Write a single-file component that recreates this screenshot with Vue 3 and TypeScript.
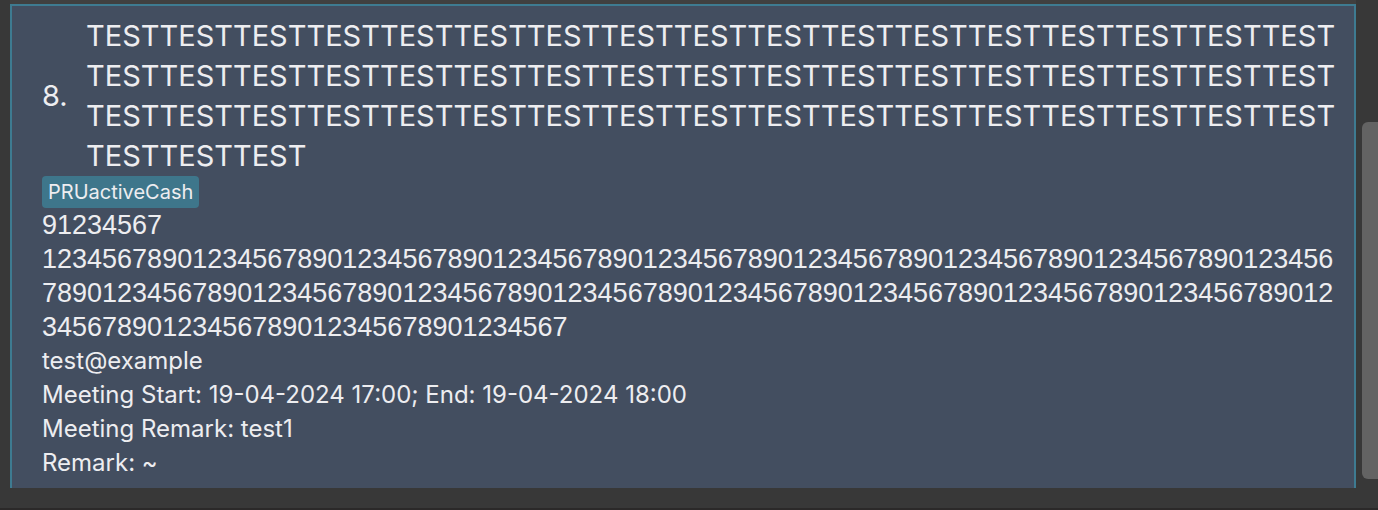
<script setup lang="ts">
interface Client {
  index: number
  name: string
  tags: string[]
  details: string[]
}

const client: Client = {
  index: 8,
  name: 'TEST'.repeat(54),
  tags: ['PRUactiveCash'],
  details: [
    '91234567',
    '1234567890'.repeat(20) + '1234567',
    'test@example',
    'Meeting Start: 19-04-2024 17:00; End: 19-04-2024 18:00',
    'Meeting Remark: test1',
    'Remark: ~',
  ],
}

const isNumeric = (text: string): boolean => /^\d+$/.test(text)
</script>

<template>
  <main class="panel">
    <div class="list">
      <article class="card">
        <header class="heading">
          <span class="index">{{ client.index }}.</span>
          <h2 class="name">{{ client.name }}</h2>
        </header>
        <div class="tags">
          <span v-for="tag in client.tags" :key="tag" class="tag">{{ tag }}</span>
        </div>
        <p
          v-for="line in client.details"
          :key="line"
          class="detail"
          :class="{ numeric: isNumeric(line) }"
        >{{ line }}</p>
      </article>
    </div>
    <div class="track"><div class="thumb"></div></div>
  </main>
</template>

<style>
body {
  background: #383838;
}
</style>

<style scoped>
.panel {
  display: flex;
  height: 100vh;
  box-sizing: border-box;
  padding-bottom: 20px;
  border-bottom: 2px solid #2b2929;
  background: #383838;
  color: #ededf0;
  font-family: Inter, "Liberation Sans", sans-serif;
}

.list {
  flex: 1;
  min-width: 0;
  margin-left: 10px;
  padding-top: 4px;
  background: #404040;
  display: flex;
}

.card {
  flex: 1;
  min-width: 0;
  box-sizing: border-box;
  padding: 10px 12px 8px 30px;
  border: 2px solid #3e7b91;
  border-bottom: 0;
  background: #434e60;
}

.heading {
  display: flex;
  align-items: center;
  gap: 16px;
  font-size: 29px;
  line-height: 40px;
}

.index {
  min-width: 28px;
}

.name {
  flex: 1;
  min-width: 0;
  margin: 0;
  font: inherit;
  overflow-wrap: anywhere;
}

.tags {
  display: flex;
  gap: 6px;
}

.tag {
  padding: 0 6px;
  border-radius: 4px;
  background: #3e768b;
  font-size: 20px;
  line-height: 32px;
}

.detail {
  margin: 0;
  font-size: 24px;
  line-height: 34px;
  overflow-wrap: anywhere;
}

.numeric {
  font-family: "Liberation Sans", Arial, sans-serif;
  font-size: 27px;
}

.track {
  display: flex;
  flex-direction: column;
  width: 22px;
  box-sizing: border-box;
  padding: 122px 0 9px 6px;
}

.thumb {
  flex: 1;
  border-radius: 6px 0 0 6px;
  background: #636363;
}
</style>
